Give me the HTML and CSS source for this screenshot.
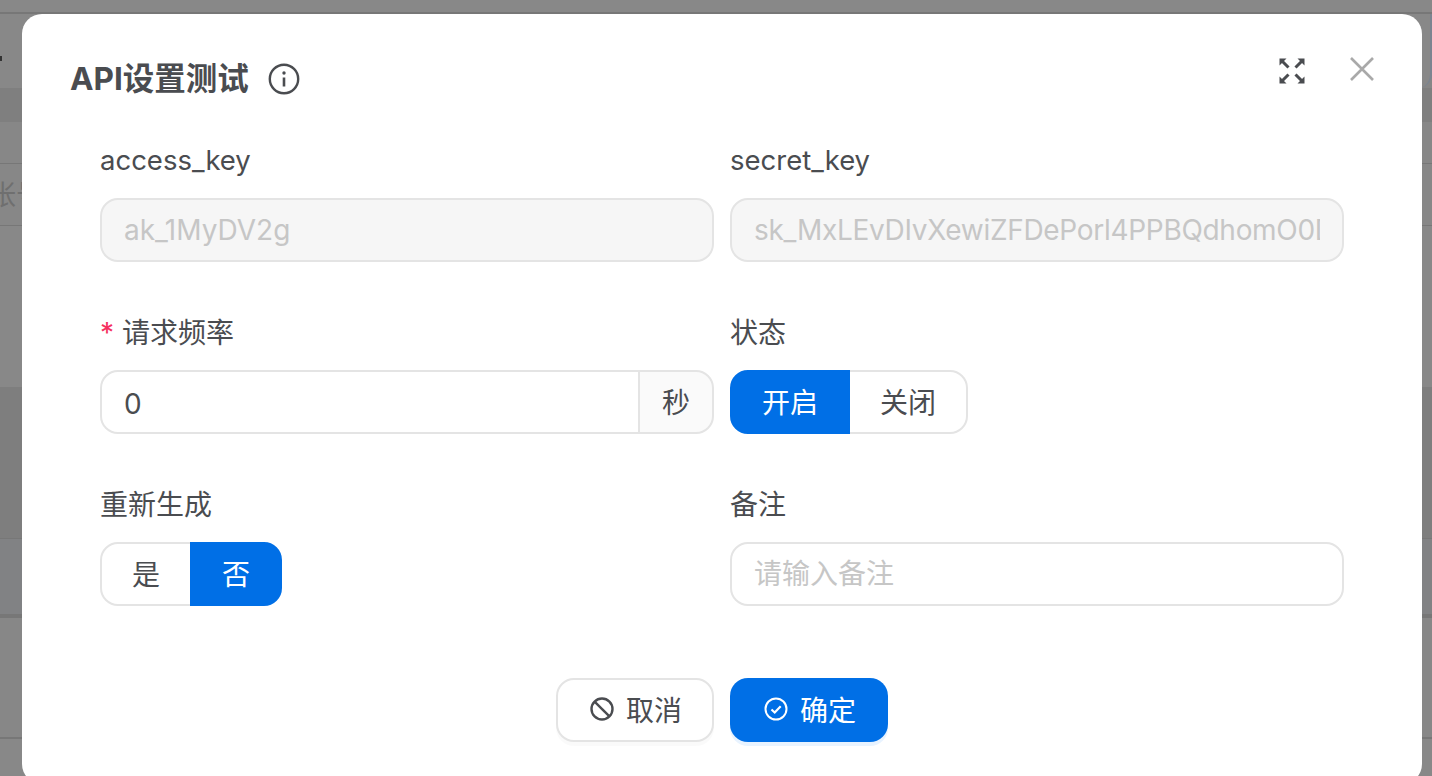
FILE: index.html
```html
<!DOCTYPE html>
<html lang="zh-CN">
<head>
    <meta charset="UTF-8">
    <meta name="viewport" content="width=device-width, initial-scale=1.0">
    <title>API设置测试</title>
    <link rel="stylesheet" href="styles.css">
</head>
<body>
    <!-- dimmed page behind the modal -->
    <div class="backdrop">
        <div class="bg-row bg-top"></div>
        <div class="bg-row bg-head">
            <div class="bg-card"><span class="bg-mark"></span></div>
        </div>
        <div class="bg-row bg-tabs"></div>
        <div class="bg-row bg-plain"></div>
        <div class="bg-row bg-account"><span class="bg-text">张号</span></div>
        <div class="bg-row bg-tall"></div>
        <div class="bg-row bg-dark"></div>
        <div class="bg-row bg-blue"></div>
        <div class="bg-row bg-plain2"></div>
        <div class="bg-row bg-end"></div>
    </div>

    <div class="modal">
        <div class="modal-head">
            <h2 class="modal-title">API设置测试</h2>
            <svg class="icon-info" viewBox="0 0 32 32" fill="none" stroke="#4a4c50">
                <circle cx="16" cy="16" r="14.2" stroke-width="2.4"/>
                <circle cx="16" cy="10" r="1.7" fill="#4a4c50" stroke="none"/>
                <path d="M16 14.5v9" stroke-width="2.6"/>
            </svg>
            <div class="modal-tools">
                <svg class="icon-expand" viewBox="0 0 26 26" fill="none" stroke="#4a4c50" stroke-width="3">
                    <path d="M9.500 9.500L3 3"/>
                    <path d="M16.500 9.500L23 3"/>
                    <path d="M9.500 16.500L3 23"/>
                    <path d="M16.500 16.500L23 23"/>
                    <path d="M0.500 7.500V0.500h7z" fill="#4a4c50" stroke="none"/>
                    <path d="M25.500 7.500V0.500h-7z" fill="#4a4c50" stroke="none"/>
                    <path d="M0.500 18.500V25.500h7z" fill="#4a4c50" stroke="none"/>
                    <path d="M25.500 18.500V25.500h-7z" fill="#4a4c50" stroke="none"/>
                </svg>
                <svg class="icon-close" viewBox="0 0 24 24" fill="none" stroke="#a9a9a9" stroke-width="2.6">
                    <path d="M1 1l22 22M23 1L1 23"/>
                </svg>
            </div>
        </div>

        <form class="form-grid">
            <div class="field">
                <label class="field-label latin">access_key</label>
                <input class="text-input is-disabled" type="text" value="ak_1MyDV2g" disabled>
            </div>
            <div class="field">
                <label class="field-label latin">secret_key</label>
                <input class="text-input is-disabled secret" type="text" value="sk_MxLEvDIvXewiZFDePorl4PPBQdhomO0Dk8sYt" disabled>
            </div>

            <div class="field">
                <label class="field-label"><span class="required">*</span>请求频率</label>
                <div class="input-group">
                    <input class="text-input group-input" type="text" value="0">
                    <span class="addon">秒</span>
                </div>
            </div>
            <div class="field">
                <label class="field-label">状态</label>
                <div class="segment">
                    <span class="seg-item active">开启</span>
                    <span class="seg-item">关闭</span>
                </div>
            </div>

            <div class="field">
                <label class="field-label">重新生成</label>
                <div class="segment">
                    <span class="seg-item">是</span>
                    <span class="seg-item active">否</span>
                </div>
            </div>
            <div class="field">
                <label class="field-label">备注</label>
                <input class="text-input" type="text" placeholder="请输入备注">
            </div>
        </form>

        <div class="modal-foot">
            <button class="btn btn-default" type="button">
                <svg class="btn-icon" viewBox="0 0 24 24" fill="none" stroke="#4a4c50" stroke-width="2.400">
                    <circle cx="12" cy="12" r="10.500"/>
                    <path d="M4.600 4.600l14.800 14.800"/>
                </svg>
                取消
            </button>
            <button class="btn btn-primary" type="button">
                <svg class="btn-icon" viewBox="0 0 24 24" fill="none" stroke="#fff" stroke-width="2">
                    <circle cx="12" cy="12" r="10.500"/>
                    <path d="M7.500 12.500l3.200 3 6-6.200" stroke-width="2.200"/>
                </svg>
                确定
            </button>
        </div>
    </div>
</body>
</html>
```

FILE: styles.css
```css
html, body {
    height: 100%;
}
body {
    margin: 0;
    overflow: hidden;
    background: #888;
    color: #4a4c50;
    font-family: Inter, "Noto Sans CJK SC", sans-serif;
    font-size: 28px;
}

/* page behind the overlay */
.backdrop {
    height: 776px;
    overflow: hidden;
}
.bg-row {
    box-sizing: border-box;
    border-bottom: 1px solid #777;
}
.bg-top { height: 14px; background: #888; border-bottom-width: 2px; }
.bg-head { height: 74px; background: #868686; border-bottom: 0; }
.bg-tabs { height: 34px; background: #7f7f7f; border-bottom: 0; }
.bg-plain { height: 42px; background: #878787; }
.bg-account { height: 62px; background: #878787; display: flex; align-items: center; padding-bottom: 4px; }
.bg-tall { height: 161px; background: #888; border-bottom: 0; }
.bg-dark { height: 152px; background: #7e7e7e; }
.bg-blue { height: 79px; background: #818284; border-bottom: 4px solid #777; }
.bg-plain2 { height: 121px; background: #878787; border-bottom-width: 2px; }
.bg-end { height: 37px; background: #888; border-bottom: 0; }
.bg-card {
    position: relative;
    height: 74px;
    background: #888;
    border-right: 2px solid #7b8490;
    border-radius: 0 0 14px 0;
    box-sizing: border-box;
}
.bg-mark {
    position: absolute;
    left: 0;
    top: 42px;
    width: 2px;
    height: 5px;
    background: #333;
}
.bg-text {
    margin-left: -12px;
    font-size: 28px;
    color: #6f6f6f;
}

/* modal */
.modal {
    position: absolute;
    left: 22px;
    top: 14px;
    width: 1400px;
    height: 770px;
    box-sizing: border-box;
    background: #fff;
    border-radius: 20px;
}
.modal-head {
    display: flex;
    align-items: center;
    padding: 46px 48px 0 48px;
    height: 38px;
}
.modal-title {
    margin: 0;
    font-size: 31.5px;
    font-weight: 700;
    line-height: 38px;
    color: #4a4c50;
}
.icon-info {
    width: 32px;
    height: 32px;
    margin-left: 19px;
}
.modal-tools {
    display: flex;
    align-items: center;
    gap: 45px;
    margin-left: auto;
    margin-top: -16px;
}
.icon-expand {
    width: 26px;
    height: 26px;
}
.icon-close {
    width: 24px;
    height: 24px;
    margin-top: -4px;
}

.form-grid {
    display: grid;
    grid-template-columns: 614px 614px;
    column-gap: 16px;
    row-gap: 48px;
    padding: 40px 0 0 78px;
}
.field {
    display: flex;
    flex-direction: column;
    gap: 16px;
}
.field-label {
    height: 44px;
    line-height: 46px;
    font-size: 28px;
}
.field-label.latin {
    font-size: 27.5px;
    line-height: 44px;
}
.required {
    color: #f5305f;
    margin-right: 8px;
}
.text-input {
    box-sizing: border-box;
    width: 100%;
    height: 64px;
    padding: 0 22px;
    border: 2px solid #e4e4e4;
    border-radius: 18px;
    background: #fff;
    color: #4a4c50;
    font-family: inherit;
    font-size: 28px;
    outline: none;
}
.text-input::placeholder {
    color: #c6c6c6;
}
.is-disabled {
    background: #f6f6f6;
    color: #c6c6c6;
}
.secret {
    letter-spacing: -0.3px;
}
.input-group {
    display: flex;
}
.group-input {
    flex: 1;
    min-width: 0;
    border-radius: 18px 0 0 18px;
    padding-top: 3px;
}
.addon {
    box-sizing: border-box;
    width: 76px;
    height: 64px;
    margin-left: -2px;
    line-height: 62px;
    text-align: center;
    border: 2px solid #e4e4e4;
    border-radius: 0 18px 18px 0;
    background: #fafafa;
}
.segment {
    display: flex;
}
.seg-item {
    position: relative;
    box-sizing: border-box;
    height: 64px;
    padding: 0 30px;
    line-height: 62px;
    border: 2px solid #e4e4e4;
    background: #fff;
}
.seg-item:first-child {
    border-radius: 18px 0 0 18px;
}
.seg-item:last-child {
    margin-left: -2px;
    border-radius: 0 18px 18px 0;
}
.seg-item.active {
    z-index: 1;
    color: #fff;
    background: #006fe6;
    border-color: #006fe6;
}

.modal-foot {
    display: flex;
    justify-content: center;
    gap: 16px;
    margin-top: 72px;
}
.btn {
    display: flex;
    align-items: center;
    justify-content: center;
    gap: 12px;
    box-sizing: border-box;
    width: 158px;
    height: 64px;
    padding: 0 0 2px 2px;
    border-radius: 18px;
    font-family: inherit;
    font-size: 28px;
}
.btn-default {
    color: #4a4c50;
    background: #fff;
    border: 2px solid #e4e4e4;
    box-shadow: 0 4px 0 rgba(0, 0, 0, 0.02);
}
.btn-primary {
    color: #fff;
    background: #006fe6;
    border: 0;
    box-shadow: 0 4px 0 #e8f3ff;
}
.btn-icon {
    width: 24px;
    height: 24px;
}
```
